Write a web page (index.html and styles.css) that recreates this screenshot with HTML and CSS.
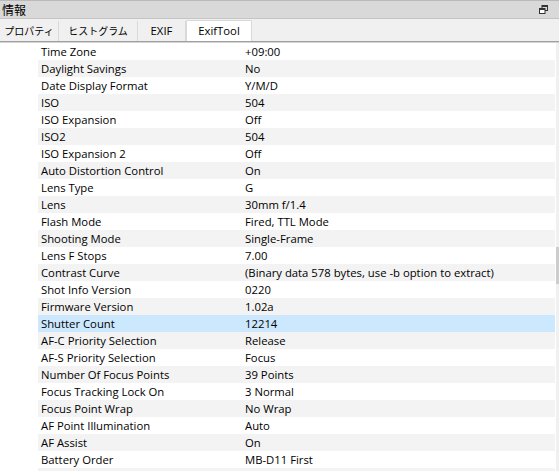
FILE: index.html
```html
<!DOCTYPE html>
<html lang="ja">
<head>
    <meta charset="UTF-8">
    <title>情報</title>
    <link rel="stylesheet" href="styles.css">
</head>
<body>
    <div class="panel">
        <div class="titlebar">
            <span class="title">情報</span>
            <svg class="restore" width="9" height="9" viewBox="0 0 9 9">
                <rect x="3" y="0.5" width="5.5" height="5" fill="none" stroke="#333" stroke-width="1"/>
                <rect x="3" y="0.5" width="5.5" height="1.5" fill="#333"/>
                <rect x="0.5" y="3.5" width="5.5" height="5" fill="#fff" stroke="#333" stroke-width="1"/>
                <rect x="0.5" y="3.5" width="5.5" height="1.5" fill="#333"/>
            </svg>
        </div>

        <div class="tabs">
            <div class="tab tab-props">プロパティ</div>
            <div class="tab tab-hist">ヒストグラム</div>
            <div class="tab tab-exif">EXIF</div>
            <div class="tab tab-tool active">ExifTool</div>
        </div>

        <div class="content">
            <div class="list" id="list"></div>
            <div class="scrollbar"><div class="thumb"></div></div>
        </div>
    </div>

    <script>
        // tag name / value pairs from exiftool output
        const tags = [
            ['Time Zone', '+09:00'],
            ['Daylight Savings', 'No'],
            ['Date Display Format', 'Y/M/D'],
            ['ISO', '504'],
            ['ISO Expansion', 'Off'],
            ['ISO2', '504'],
            ['ISO Expansion 2', 'Off'],
            ['Auto Distortion Control', 'On'],
            ['Lens Type', 'G'],
            ['Lens', '30mm f/1.4'],
            ['Flash Mode', 'Fired, TTL Mode'],
            ['Shooting Mode', 'Single-Frame'],
            ['Lens F Stops', '7.00'],
            ['Contrast Curve', '(Binary data 578 bytes, use -b option to extract)'],
            ['Shot Info Version', '0220'],
            ['Firmware Version', '1.02a'],
            ['Shutter Count', '12214'],
            ['AF-C Priority Selection', 'Release'],
            ['AF-S Priority Selection', 'Focus'],
            ['Number Of Focus Points', '39 Points'],
            ['Focus Tracking Lock On', '3 Normal'],
            ['Focus Point Wrap', 'No Wrap'],
            ['AF Point Illumination', 'Auto'],
            ['AF Assist', 'On'],
            ['Battery Order', 'MB-D11 First'],
            ['', '']
        ];

        const selected = 'Shutter Count';
        const list = document.getElementById('list');

        tags.forEach(([name, value], i) => {
            const row = document.createElement('div');
            row.className = 'row';
            if (i % 2 === 1) row.classList.add('alt');
            if (name === selected) row.classList.add('selected');

            const key = document.createElement('span');
            key.className = 'key';
            key.textContent = name;

            const val = document.createElement('span');
            val.className = 'value';
            val.textContent = value;

            row.append(key, val);
            list.appendChild(row);
        });
    </script>
</body>
</html>
```

FILE: styles.css
```css
body {
    margin: 0;
    font-family: "Open Sans", "Noto Sans", sans-serif;
    font-size: 11.3px;
    color: #000;
    background: #fff;
    overflow: hidden;
}
.panel {
    width: 559px;
    height: 471px;
    display: flex;
    flex-direction: column;
    overflow: hidden;
}
.titlebar {
    height: 17px;
    background: #d9d9d9;
    border-top: 1px solid #b9b9b9;
    border-bottom: 1px solid #c4c4c4;
    display: flex;
    align-items: center;
    justify-content: space-between;
    padding: 0 11px 0 2px;
    font-family: "Noto Sans CJK JP", sans-serif;
    font-size: 12px;
}
.title {
    line-height: 17px;
}
.restore {
    display: block;
}
.tabs {
    height: 22px;
    background: #f0f0f0;
    display: flex;
    align-items: flex-end;
    border-bottom: 1px solid #a0a0a0;
    font-family: "Noto Sans CJK JP", sans-serif;
    font-size: 10px;
}
.tab {
    height: 20px;
    line-height: 20px;
    border-right: 1px solid #d9d9d9;
    box-sizing: border-box;
    text-align: center;
    white-space: nowrap;
    overflow: hidden;
}
.tab-props { width: 59px; }
.tab-hist { width: 79px; }
.tab-exif { width: 48px; font-family: "Open Sans", sans-serif; font-size: 11.3px; }
.tab.active {
    width: 66px;
    height: 21px;
    background: #fff;
    border: 1px solid #d9d9d9;
    border-bottom: none;
    font-family: "Open Sans", sans-serif;
    font-size: 11.3px;
}
.content {
    flex: 1;
    display: flex;
    border-top: 1px solid #d4d4d4;
    overflow: hidden;
}
.list {
    flex: 1;
    padding-left: 38px;
    padding-right: 1px;
}
.row {
    height: 17px;
    line-height: 17px;
    display: grid;
    grid-template-columns: 204px 1fr;
    white-space: nowrap;
}
.row.alt {
    background: #f3f3f3;
}
.row.selected {
    background: #cce8ff;
}
.key {
    padding-left: 3px;
}
.value {
    padding-left: 3px;
}
.scrollbar {
    width: 3px;
    background: #f0f0f0;
    padding-top: 204px;
}
.thumb {
    height: 37px;
    background: #cdcdcd;
}
```
